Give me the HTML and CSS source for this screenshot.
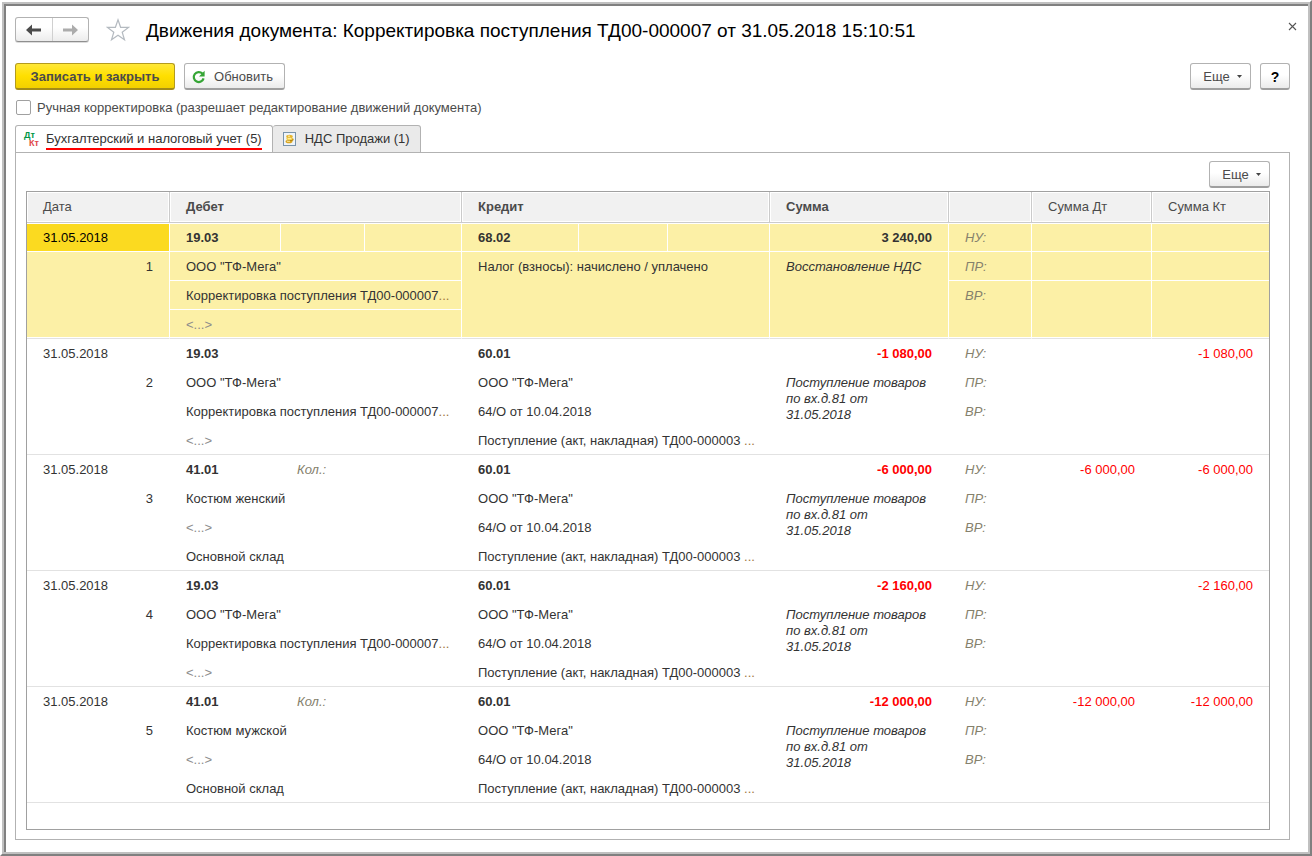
FILE: index.html
```html
<!DOCTYPE html>
<html lang="ru">
<head>
<meta charset="utf-8">
<title>Движения документа</title>
<link rel="stylesheet" href="styles.css">
</head>
<body>
<div class="window"><div class="frame"><main class="content">
  <header class="titlebar">
    <div class="nav">
      <button class="nav-btn" type="button" aria-label="Назад"><svg width="15" height="12" viewBox="0 0 15 12"><path d="M0 6 6 .5V4.5h9v3H6v4z" fill="#4b4b4b"/></svg></button>
      <button class="nav-btn" type="button" aria-label="Вперед"><svg width="15" height="12" viewBox="0 0 15 12"><path d="M15 6 9 .5V4.5H0v3h9v4z" fill="#acacac"/></svg></button>
    </div>
    <button class="star" type="button" aria-label="Избранное"><svg width="24" height="24" viewBox="0 0 24 24"><path d="M12 1.8 14.6 9.3 22.5 9.4 16.2 14.2 18.5 21.8 12 17.3 5.5 21.8 7.8 14.2 1.5 9.4 9.4 9.3z" fill="#fff" stroke="#b4bac0" stroke-width="1.2"/></svg></button>
    <h1 class="title">Движения документа: Корректировка поступления ТД00-000007 от 31.05.2018 15:10:51</h1>
    <button class="close" type="button" aria-label="Закрыть"><svg width="9" height="9" viewBox="0 0 9 9"><path d="M1 1 8 8M8 1 1 8" stroke="#555" stroke-width="1.1"/></svg></button>
  </header>

  <div class="commands">
    <button class="btn btn-primary" type="button">Записать и закрыть</button>
    <button class="btn btn-refresh" type="button"><svg width="14" height="14" viewBox="0 0 14 14"><path d="M10.4 3.6A5 5 0 1 0 11.6 8.4" fill="none" stroke="#35a535" stroke-width="2.2"/><path d="M12.6 .8v5.6H7z" fill="#35a535"/></svg>Обновить</button>
    <span class="spacer"></span>
    <button class="btn btn-more" type="button">Еще<svg width="5" height="3" viewBox="0 0 5 3"><path d="M0 0h5L2.5 3z" fill="#444"/></svg></button>
    <button class="btn btn-help" type="button">?</button>
  </div>

  <label class="manual"><input class="check" type="checkbox">Ручная корректировка (разрешает редактирование движений документа)</label>

  <div class="tabs" role="tablist">
    <button class="tab tab-active" role="tab" aria-selected="true" type="button">
      <span class="dtkt"><span class="dt">Дт</span><span class="kt">Кт</span></span>
      <span class="tab-label underlined">Бухгалтерский и налоговый учет (5)</span>
    </button>
    <button class="tab" role="tab" aria-selected="false" type="button">
      <svg width="13" height="14" viewBox="0 0 13 14"><rect x=".5" y=".5" width="12" height="13" fill="#eef4fa" stroke="#7893ab"/><ellipse cx="6" cy="9.5" rx="3.5" ry="1.8" fill="#d9a420"/><ellipse cx="7.3" cy="7.4" rx="3.3" ry="1.7" fill="#b8860b"/><ellipse cx="6.5" cy="6.5" rx="3.3" ry="1.6" fill="#f5d45a"/><ellipse cx="6.5" cy="4.4" rx="3.3" ry="1.6" fill="#e5b52f"/><path d="M4 9.2h3M5 6.3h3M5 4.2h2" stroke="#fff3b0"/></svg>
      <span class="tab-label">НДС Продажи (1)</span>
    </button>
  </div>

  <section class="panel">
    <div class="panel-tools"><button class="btn btn-more" type="button">Еще<svg width="5" height="3" viewBox="0 0 5 3"><path d="M0 0h5L2.5 3z" fill="#444"/></svg></button></div>
    <div class="grid">
      <table class="entries">
        <colgroup><col class="w-date"><col class="w-d1"><col class="w-d2"><col class="w-d3"><col class="w-c1"><col class="w-c2"><col class="w-c3"><col class="w-sum"><col class="w-kind"><col class="w-dt"><col class="w-kt"></colgroup>
        <thead>
          <tr><th class="plain">Дата</th><th colspan="3">Дебет</th><th colspan="3">Кредит</th><th>Сумма</th><th></th><th class="plain">Сумма Дт</th><th class="plain">Сумма Кт</th></tr>
        </thead>
        <tbody class="selected">
          <tr><td class="current">31.05.2018</td><td class="acc">19.03</td><td></td><td></td><td class="acc">68.02</td><td></td><td></td><td class="num acc">3 240,00</td><td class="kind">НУ:</td><td></td><td></td></tr>
          <tr><td class="num" rowspan="3">1</td><td colspan="3">ООО "ТФ-Мега"</td><td colspan="3" rowspan="3">Налог (взносы): начислено / уплачено</td><td class="note" rowspan="3">Восстановление НДС</td><td class="kind">ПР:</td><td></td><td></td></tr>
          <tr><td colspan="3">Корректировка поступления ТД00-000007<i class="dots">...</i></td><td class="kind" rowspan="2">ВР:</td><td rowspan="2"></td><td rowspan="2"></td></tr>
          <tr><td class="empty" colspan="3">&lt;...&gt;</td></tr>
        </tbody>
        <tbody>
          <tr><td>31.05.2018</td><td class="acc">19.03</td><td></td><td></td><td class="acc">60.01</td><td></td><td></td><td class="num acc neg">-1 080,00</td><td class="kind">НУ:</td><td></td><td class="num neg">-1 080,00</td></tr>
          <tr><td class="num" rowspan="3">2</td><td colspan="3">ООО "ТФ-Мега"</td><td colspan="3">ООО "ТФ-Мега"</td><td class="note" rowspan="3">Поступление товаров<br>по вх.д.81 от<br>31.05.2018</td><td class="kind">ПР:</td><td></td><td></td></tr>
          <tr><td colspan="3">Корректировка поступления ТД00-000007<i class="dots">...</i></td><td colspan="3">64/О от 10.04.2018</td><td class="kind" rowspan="2">ВР:</td><td rowspan="2"></td><td rowspan="2"></td></tr>
          <tr><td class="empty" colspan="3">&lt;...&gt;</td><td colspan="3">Поступление (акт, накладная) ТД00-000003 <i class="dots">...</i></td></tr>
        </tbody>
        <tbody>
          <tr><td>31.05.2018</td><td class="acc">41.01</td><td class="kind">Кол.:</td><td></td><td class="acc">60.01</td><td></td><td></td><td class="num acc neg">-6 000,00</td><td class="kind">НУ:</td><td class="num neg">-6 000,00</td><td class="num neg">-6 000,00</td></tr>
          <tr><td class="num" rowspan="3">3</td><td colspan="3">Костюм женский</td><td colspan="3">ООО "ТФ-Мега"</td><td class="note" rowspan="3">Поступление товаров<br>по вх.д.81 от<br>31.05.2018</td><td class="kind">ПР:</td><td></td><td></td></tr>
          <tr><td class="empty" colspan="3">&lt;...&gt;</td><td colspan="3">64/О от 10.04.2018</td><td class="kind" rowspan="2">ВР:</td><td rowspan="2"></td><td rowspan="2"></td></tr>
          <tr><td colspan="3">Основной склад</td><td colspan="3">Поступление (акт, накладная) ТД00-000003 <i class="dots">...</i></td></tr>
        </tbody>
        <tbody>
          <tr><td>31.05.2018</td><td class="acc">19.03</td><td></td><td></td><td class="acc">60.01</td><td></td><td></td><td class="num acc neg">-2 160,00</td><td class="kind">НУ:</td><td></td><td class="num neg">-2 160,00</td></tr>
          <tr><td class="num" rowspan="3">4</td><td colspan="3">ООО "ТФ-Мега"</td><td colspan="3">ООО "ТФ-Мега"</td><td class="note" rowspan="3">Поступление товаров<br>по вх.д.81 от<br>31.05.2018</td><td class="kind">ПР:</td><td></td><td></td></tr>
          <tr><td colspan="3">Корректировка поступления ТД00-000007<i class="dots">...</i></td><td colspan="3">64/О от 10.04.2018</td><td class="kind" rowspan="2">ВР:</td><td rowspan="2"></td><td rowspan="2"></td></tr>
          <tr><td class="empty" colspan="3">&lt;...&gt;</td><td colspan="3">Поступление (акт, накладная) ТД00-000003 <i class="dots">...</i></td></tr>
        </tbody>
        <tbody>
          <tr><td>31.05.2018</td><td class="acc">41.01</td><td class="kind">Кол.:</td><td></td><td class="acc">60.01</td><td></td><td></td><td class="num acc neg">-12 000,00</td><td class="kind">НУ:</td><td class="num neg">-12 000,00</td><td class="num neg">-12 000,00</td></tr>
          <tr><td class="num" rowspan="3">5</td><td colspan="3">Костюм мужской</td><td colspan="3">ООО "ТФ-Мега"</td><td class="note" rowspan="3">Поступление товаров<br>по вх.д.81 от<br>31.05.2018</td><td class="kind">ПР:</td><td></td><td></td></tr>
          <tr><td class="empty" colspan="3">&lt;...&gt;</td><td colspan="3">64/О от 10.04.2018</td><td class="kind" rowspan="2">ВР:</td><td rowspan="2"></td><td rowspan="2"></td></tr>
          <tr><td colspan="3">Основной склад</td><td colspan="3">Поступление (акт, накладная) ТД00-000003 <i class="dots">...</i></td></tr>
        </tbody>
      </table>
    </div>
  </section>
</main></div></div>
</body>
</html>
```
FILE: styles.css
```css
* { box-sizing: border-box; }
body {
  margin: 0;
  min-height: 100vh;
  display: flex;
  background: #fff;
  color: #333;
  font: 13px/16px "Liberation Sans", Arial, sans-serif;
}
button { font: inherit; color: inherit; margin: 0; padding: 0; }

/* Bevelled window frame */
.window { flex: 1; display: flex; border: 2px solid; border-color: #fff #808080 #808080 #fff; }
.frame { flex: 1; display: flex; border: 2px solid #c0c0c0; }
.content {
  flex: 1;
  min-width: 0;
  display: flex;
  flex-direction: column;
  border-top: 2px solid #808080;
  border-left: 2px solid #808080;
  padding: 10px 18px 12px 9px;
}

.titlebar { display: flex; align-items: flex-start; height: 30px; }
.nav {
  display: flex;
  width: 74px;
  height: 25px;
  margin-top: 1px;
  border: 1px solid #b2b2b2;
  border-bottom-color: #8f8f8f;
  border-radius: 3px;
  background: linear-gradient(#fff 40%, #ececec);
  box-shadow: 0 1px 0 #dcdcdc;
}
.nav-btn { flex: 1; display: flex; align-items: center; justify-content: center; border: 0; background: none; }
.nav-btn + .nav-btn { border-left: 1px solid #d0d0d0; }
.star { display: flex; margin: 2px 0 0 17px; border: 0; background: none; }
.title { margin: 3px 0 0 16px; font-size: 19px; line-height: 24px; font-weight: 400; color: #000; white-space: nowrap; }
.close { display: flex; margin: 6px -7px 0 auto; border: 0; background: none; }

.commands { display: flex; gap: 9px; margin-top: 17px; }
.spacer { flex: 1; }
.btn {
  display: flex;
  align-items: center;
  justify-content: center;
  height: 27px;
  padding-top: 1px;
  border: 1px solid #b2b2b2;
  border-bottom: 2px solid #9f9f9f;
  border-radius: 3px;
  background: linear-gradient(#fff 45%, #ebebeb);
  color: #4b4b4b;
}
.btn-primary {
  width: 160px;
  border-color: #b39b1e;
  border-bottom-color: #a38c18;
  background: linear-gradient(#ffe838, #ffdf00 50%, #f2d000);
  font-weight: 700;
}
.btn-refresh { width: 101px; gap: 8px; padding-right: 4px; }
.btn-more { width: 61px; gap: 7px; padding-left: 4px; }
.btn-help { width: 30px; font-weight: 700; font-size: 14px; color: #000; }

.manual { display: flex; align-items: center; gap: 6px; margin-top: 9px; height: 17px; color: #4b4b4b; }
.check {
  appearance: none;
  width: 15px;
  height: 15px;
  margin: 0 0 0 1px;
  border: 1px solid #a0a0a0;
  border-radius: 2px;
  background: #fff;
}

.tabs { display: flex; height: 28px; margin-top: 9px; margin-bottom: -1px; }
.tab {
  display: flex;
  align-items: center;
  gap: 9px;
  height: 28px;
  padding: 0 10px;
  border: 1px solid #b2b2b2;
  border-radius: 3px 3px 0 0;
  background: #eaeaea;
  color: #333;
}
.tab + .tab { border-left: 0; }
.tab-active { gap: 6px; background: #fff; border-bottom-color: #fff; padding-left: 8px; }
.tab-label { line-height: 16px; }
.underlined { align-self: flex-start; height: 24px; padding-top: 5px; border-bottom: 2px solid #f00; }
.dtkt { display: grid; grid-template-columns: 5px 11px; font-size: 9px; line-height: 8px; font-weight: 700; text-align: left; }
.dt { grid-area: 1 / 1 / 2 / 3; color: #009646; }
.kt { grid-area: 2 / 2; color: #e04848; }

.panel { flex: 1; display: flex; flex-direction: column; padding: 8px 19px 9px 10px; border: 1px solid #b2b2b2; }
.panel-tools { display: flex; justify-content: flex-end; margin-bottom: 3px; }
.grid { flex: 1; border: 1px solid #a0a0a0; }

.entries { width: 100%; table-layout: fixed; border-collapse: separate; border-spacing: 0; }
.w-date { width: 143px; }
.w-d1 { width: 111px; }
.w-d2 { width: 84px; }
.w-d3 { width: 97px; }
.w-c1 { width: 117px; }
.w-c2 { width: 89px; }
.w-c3 { width: 102px; }
.w-sum { width: 179px; }
.w-kind { width: 83px; }
.w-dt { width: 120px; }
.w-kt { width: 117px; }

.entries th {
  height: 31px;
  padding: 0 16px;
  text-align: left;
  color: #4b4b4b;
  background: #f1f1f1;
  border-right: 1px solid #cbcbcb;
  border-bottom: 1px solid #cbcbcb;
  box-shadow: inset 0 0 0 1px #fff;
}
.entries th:last-child { border-right: 0; }
.entries .plain { font-weight: 400; }
.entries td {
  height: 29px;
  padding: 7px 16px 5px;
  vertical-align: top;
  white-space: nowrap;
  border-right: 1px solid transparent;
  border-bottom: 1px solid transparent;
}
.entries td:last-child { padding-right: 15px; }
.entries tbody:not(.selected) td { border-right-width: 0; padding-right: 17px; }
.entries tbody:not(.selected) td:last-child { padding-right: 16px; }
.entries tr:last-child td, .entries td[rowspan] { border-bottom-color: #e2e2e2; }
.entries .selected td { background: #fcf0a6; border-right-color: #fff; border-bottom-color: #fff; }
.entries .selected tr:not(:last-child) td:last-child { border-right-width: 0; }
.entries .selected tr:last-child td, .entries .selected td[rowspan] { border-bottom-color: #e2e2e2; box-shadow: inset 0 -1px 0 #fff; }
.selected tr:first-child td { box-shadow: inset 0 1px 0 #fff; }
.entries .selected .current { background: #fbda20; color: #000; }
.entries .acc { font-weight: 700; }
.entries .num { text-align: right; }
.entries .neg { color: #f00; }
.entries .kind { color: #85816c; font-style: italic; }
.entries .note { font-style: italic; }
.entries .empty { color: #8c8c8c; }
.dots { font-style: normal; color: #a0783c; }
```
